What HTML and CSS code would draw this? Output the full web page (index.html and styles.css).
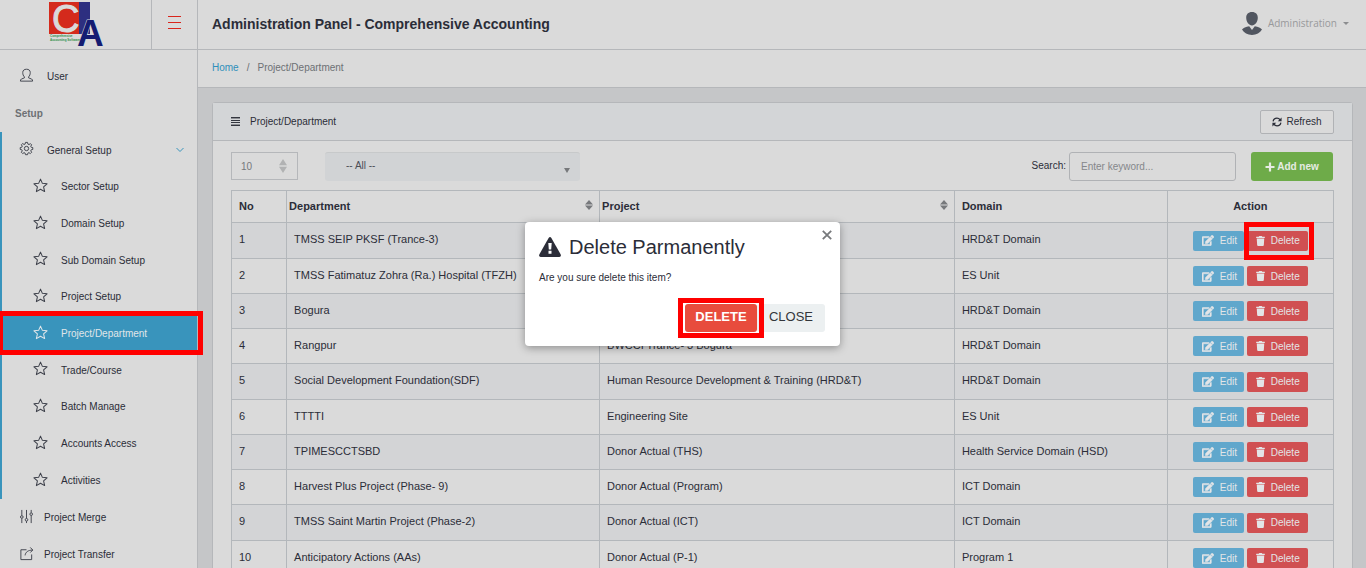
FILE: index.html
```html
<!DOCTYPE html>
<html lang="en">
<head>
<meta charset="utf-8">
<meta name="viewport" content="width=device-width, initial-scale=1">
<title>Administration Panel - Comprehensive Accounting</title>
<link rel="stylesheet" href="styles.css">
</head>
<body>
<svg class="sprite" aria-hidden="true">
  <symbol id="star" viewBox="0 0 16 16"><path d="M8 1.2 L10 5.700 L15 6.200 L11.300 9.500 L12.400 14.500 L8 12 L3.600 14.500 L4.700 9.500 L1 6.200 L6 5.700 Z" fill="none" stroke="currentColor" stroke-width="1.100" stroke-linejoin="round"/></symbol>
  <symbol id="edit" viewBox="0 0 576 512"><path fill="currentColor" d="M402.600 83.200l90.200 90.200c3.800 3.800 3.800 10 0 13.800L274.400 405.600l-92.800 10.300c-12.400 1.400-22.900-9.100-21.500-21.500l10.300-92.800L388.800 83.200c3.800-3.800 10-3.800 13.800 0zm162-22.900l-48.800-48.800c-15.200-15.200-39.900-15.200-55.200 0l-35.400 35.400c-3.800 3.800-3.800 10 0 13.800l90.200 90.200c3.800 3.800 10 3.800 13.800 0l35.400-35.400c15.200-15.300 15.200-40 0-55.200zM384 346.200V448H64V128h229.800c3.200 0 6.200-1.300 8.500-3.500l40-40c7.600-7.600 2.200-20.500-8.500-20.500H48C21.500 64 0 85.500 0 112v352c0 26.500 21.500 48 48 48h352c26.500 0 48-21.500 48-48V306.200c0-10.700-12.900-16-20.500-8.500l-40 40c-2.200 2.300-3.500 5.300-3.500 8.500z" stroke="currentColor" stroke-width="24"/></symbol>
  <symbol id="trash" viewBox="0 0 448 512"><path fill="currentColor" d="M432 32H312l-9.400-18.700A24 24 0 0 0 281.100 0H166.800a23.700 23.700 0 0 0-21.400 13.300L136 32H16A16 16 0 0 0 0 48v32a16 16 0 0 0 16 16h416a16 16 0 0 0 16-16V48a16 16 0 0 0-16-16zM53.200 467a48 48 0 0 0 47.900 45h245.800a48 48 0 0 0 47.900-45L416 128H32z"/></symbol>
  <symbol id="sort" viewBox="0 0 8 10"><path fill="currentColor" d="M4 0 L8 4.400 H0 Z M0 5.600 H8 L4 10 Z"/></symbol>
</svg>

<header class="topbar">
  <a class="brand" href="#" aria-label="Comprehensive Accounting Software">
    <svg class="logo" viewBox="0 0 54 45" aria-hidden="true">
      <rect width="31" height="32" fill="#d42a1c"/>
      <rect x="30" width="11" height="32" fill="#2d2f80"/>
      <text class="logo-c" x="3" y="30">C</text>
      <text class="logo-a" x="28" y="44">A</text>
      <text class="logo-s" x="1" y="35">Comprehensive</text>
      <text class="logo-s" x="1" y="39">Accounting Software</text>
    </svg>
  </a>
  <button class="burger" type="button" aria-label="Toggle menu"><i></i><i></i><i></i></button>
  <h1>Administration Panel - Comprehensive Accounting</h1>
  <button class="account" type="button">
    <svg class="avatar" viewBox="0 0 20 23" aria-hidden="true"><path fill="#515660" d="M10 0C13.800 0 15.800 2.200 15.800 5.800C15.800 10 13 13.500 10 13.500S4.200 10 4.200 5.800C4.200 2.200 6.200 0 10 0ZM7.200 14.200L10 18L12.800 14.200C16 14.800 19 16 20 17.600C18 21 14.500 23 10 23S2 21 0 17.600C1 16 4 14.800 7.200 14.200Z"/></svg>
    <span>Administration</span><i class="caret"></i>
  </button>
</header>

<div class="shell">
  <nav class="sidebar" aria-label="Main">
    <ul>
      <li><a href="#"><svg class="ico" viewBox="0 0 16 16" aria-hidden="true"><path d="M5.800 9.500C4.500 8.500 4 6.500 4 4.800C4 2.500 5.600 1.300 8 1.300S12 2.500 12 4.800C12 6.500 11.500 8.500 10.200 9.500V10.500L13.500 11.800Q14.500 12.300 14.500 14H1.500Q1.500 12.300 2.500 11.800L5.800 10.500Z"/></svg>User</a></li>
      <li class="title">Setup</li>
      <li class="group">
        <a class="short" href="#"><svg class="ico" viewBox="0 0 16 16" aria-hidden="true"><circle cx="8" cy="8" r="2.300"/><path d="M6.900 1.500H9.100L9.500 3.300L10.700 3.800L12.200 2.800L13.500 4.100L12.500 5.600L13 6.700L14.700 7V9L13 9.400L12.500 10.500L13.500 12L12.100 13.400L10.600 12.400L9.500 12.900L9.100 14.600H6.900L6.500 12.900L5.400 12.400L3.900 13.400L2.500 12L3.500 10.500L3 9.400L1.300 9V7L3 6.600L3.500 5.500L2.500 4L3.900 2.700L5.400 3.700L6.500 3.300Z"/></svg>General Setup<svg class="chev" viewBox="0 0 8 6" aria-hidden="true"><path d="M.5 1L4 4.500L7.500 1"/></svg></a>
        <ul class="sub">
          <li><a href="#"><svg class="ico"><use href="#star"/></svg>Sector Setup</a></li>
          <li><a href="#"><svg class="ico"><use href="#star"/></svg>Domain Setup</a></li>
          <li><a href="#"><svg class="ico"><use href="#star"/></svg>Sub Domain Setup</a></li>
          <li><a href="#"><svg class="ico"><use href="#star"/></svg>Project Setup</a></li>
          <li class="active"><a href="#" aria-current="page"><svg class="ico"><use href="#star"/></svg>Project/Department</a><span class="mark mark-menu"></span></li>
          <li><a href="#"><svg class="ico"><use href="#star"/></svg>Trade/Course</a></li>
          <li><a href="#"><svg class="ico"><use href="#star"/></svg>Batch Manage</a></li>
          <li><a href="#"><svg class="ico"><use href="#star"/></svg>Accounts Access</a></li>
          <li><a href="#"><svg class="ico"><use href="#star"/></svg>Activities</a></li>
        </ul>
      </li>
      <li class="tight"><a href="#"><svg class="ico" viewBox="0 0 16 16" aria-hidden="true"><path d="M3 1V7M3 10V15M8 1V10M8 13V15M13 1V4M13 7V15"/><circle cx="3" cy="8.500" r="1.400"/><circle cx="8" cy="11.500" r="1.400"/><circle cx="13" cy="5.500" r="1.400"/></svg>Project Merge</a></li>
      <li class="tight"><a href="#"><svg class="ico" viewBox="0 0 16 16" aria-hidden="true"><path d="M8 4H2V14.500H13.500V9M6.500 10C7 6.500 9.500 4.500 14.500 4.300M12 1.500L14.700 4.300L12 7"/></svg>Project Transfer</a></li>
    </ul>
  </nav>

  <main>
    <nav class="crumbs" aria-label="Breadcrumb"><a href="#">Home</a><span>/</span><span>Project/Department</span></nav>
    <section class="card">
      <header class="card-head">
        <svg class="lines" viewBox="0 0 9 9" aria-hidden="true"><path d="M0 .5H9M0 3.500H9M0 5.500H9M0 8.500H9" stroke="#33363f"/><path d="M0 1.500H9M0 7.500H9" stroke="#8d8f94"/></svg>
        <h2>Project/Department</h2>
        <button class="refresh" type="button"><svg viewBox="0 0 512 512" aria-hidden="true"><path fill="none" stroke="currentColor" stroke-width="66" d="M58 225C75 125 160 60 256 60C320 60 375 90 415 140M454 287C437 387 352 452 256 452C192 452 137 422 97 372"/><path fill="currentColor" d="M490 20V215H295ZM22 492V297H217Z"/></svg>Refresh</button>
      </header>
      <div class="card-body">
        <div class="tools">
          <div class="stepper"><input type="text" value="10" aria-label="Rows per page"><svg viewBox="0 0 8 14" aria-hidden="true"><path fill="#b1b2b3" d="M4 0L8 6.300H0ZM0 7.700H8L4 14Z"/></svg></div>
          <div class="picker"><select aria-label="Filter"><option>-- All --</option></select></div>
          <label class="search-label" for="keyword">Search:</label>
          <input class="search" id="keyword" type="text" placeholder="Enter keyword...">
          <button class="add" type="button"><svg viewBox="0 0 10 10" aria-hidden="true"><path d="M5 .5V9.500M.5 5H9.500" stroke="currentColor" stroke-width="2.200"/></svg>Add new</button>
        </div>
        <table>
          <colgroup><col class="c-no"><col class="c-dep"><col class="c-pro"><col class="c-dom"><col class="c-act"></colgroup>
          <thead><tr><th>No</th><th class="sortable"><div>Department<svg><use href="#sort"/></svg></div></th><th class="sortable"><div>Project<svg><use href="#sort"/></svg></div></th><th>Domain</th><th class="act">Action</th></tr></thead>
          <tbody id="rows"></tbody>
        </table>
      </div>
    </section>
  </main>
</div>

<div class="modal" role="dialog" aria-labelledby="modal-title">
  <button class="dismiss" type="button" aria-label="Close dialog"><svg viewBox="0 0 10 10" aria-hidden="true"><path d="M.8 .8L9.200 9.200M9.200 .8L.8 9.200" stroke="currentColor" stroke-width="1.800"/></svg></button>
  <h2 id="modal-title"><svg viewBox="0 0 22 20" aria-hidden="true"><path fill="#2b2d38" d="M9.600 .9Q11-.8 12.400 .9L21.700 17.500Q22.400 19.700 20.400 20H1.600Q-.4 19.700 .3 17.500Z"/><path fill="#fff" d="M9.300 6H12.700L12.200 12.600H9.800ZM9.500 13.800H12.500V16.800H9.500Z"/></svg>Delete Parmanently</h2>
  <p>Are you sure delete this item?</p>
  <div class="modal-actions">
    <div class="marked"><button class="confirm" type="button">DELETE</button><span class="mark mark-confirm"></span></div>
    <button class="close" type="button">CLOSE</button>
  </div>
</div>
<script src="rows.js"></script>
</body>
</html>
```
FILE: styles.css
```css
* { box-sizing: border-box; }
html, body { height: 100%; }
body {
  margin: 0;
  overflow: hidden;
  position: relative;
  display: flex;
  flex-direction: column;
  background: #c5c6c8;
  color: #2b2d38;
  font: 10px/15px "Liberation Sans", Arial, sans-serif;
}
h1, h2, p, ul { margin: 0; padding: 0; }
ul { list-style: none; }
a { color: inherit; text-decoration: none; }
button, input, select { font: inherit; color: inherit; margin: 0; }
button { border: 0; padding: 0; background: none; cursor: pointer; }
.sprite { position: absolute; width: 0; height: 0; }

.topbar {
  flex: none;
  display: flex;
  align-items: stretch;
  height: 50px;
  background: #dadada;
  border-bottom: 1px solid #b5b7ba;
}
.brand { width: 152px; border-right: 1px solid #b5b7ba; display: flex; justify-content: center; padding-top: 2px; }
.logo { width: 54px; height: 45px; overflow: visible; }
.logo-c { font: 38px "Liberation Sans", sans-serif; fill: #dadada; stroke: #dadada; }
.logo-a { font: bold 37px "Liberation Sans", sans-serif; fill: #141c72; stroke: #dadada; stroke-width: 1px; paint-order: stroke; }
.logo-s { font: bold 3px "Liberation Sans", sans-serif; fill: #2f8f4a; }
.burger { width: 46px; border-right: 1px solid #b5b7ba; display: flex; flex-direction: column; align-items: center; justify-content: center; gap: 5px; padding-bottom: 4px; }
.burger i { width: 13px; height: 1px; background: #d9251c; }
.topbar h1 { flex: 1; padding-left: 14px; font-size: 14px; line-height: 48px; }
.account { display: flex; align-items: center; gap: 6px; padding: 0 17px 2px 0; color: #98999b; font-family: "Open Sans", sans-serif; }
.avatar { width: 20px; height: 23px; }
.caret { border: 3px solid transparent; border-top-color: #8c8d8f; border-bottom: 0; }

.shell { flex: 1; display: flex; min-height: 0; }
.sidebar { flex: none; width: 198px; background: #dadada; border-right: 1px solid #b5b7ba; padding-top: 8px; }
.sidebar a, .title { display: flex; align-items: center; height: 37px; }
.sidebar a { padding-left: 19px; gap: 13px; }
.sidebar .title { padding-left: 15px; font-weight: bold; color: #6d7074; }
.sidebar .short { height: 36px; }
.ico { width: 15px; height: 15px; margin-bottom: 3px; fill: none; stroke: #3e414b; }
.group { border-left: 2px solid #3994bc; }
.group .short { padding-left: 17px; }
.group .sub a { padding-left: 31px; }
.sub li { position: relative; }
.sub li:nth-child(3n):not(:last-child) a { height: 36px; }
.sub .ico { color: #3e414b; stroke: none; }
.sub .active a { background: #3994bc; color: #e0e6e9; }
.sub .active .ico { color: #e0e6e9; }
.sidebar .tight a { gap: 10px; }
.chev { width: 8px; height: 6px; margin-left: auto; margin-right: 13px; fill: none; stroke: #3994bc; }

main { flex: 1; min-width: 0; }
.crumbs { display: flex; gap: 8px; align-items: center; height: 38px; padding: 0 14px 2px; background: #dadada; border-bottom: 1px solid #b5b7ba; color: #6d7074; }
.crumbs a { color: #2f8fbb; }
.card { margin: 14px 13px 0 14px; border: 1px solid #b5b7ba; border-radius: 3px; background: #dadada; }
.card-head { display: flex; align-items: center; height: 38px; padding: 0 18px; background: #d3d5d7; border-bottom: 1px solid #b5b7ba; }
.lines { width: 9px; height: 9px; margin-right: 10px; }
.card-head h2 { flex: 1; font-size: 10px; font-weight: normal; }
.refresh { display: flex; align-items: center; justify-content: center; gap: 4px; width: 74px; height: 24px; border: 1px solid #b0b2b5; border-radius: 2px; background: #dadada; }
.refresh svg { width: 10px; height: 10px; }
.card-body { padding: 11px 18px 40px; }
.tools { display: flex; align-items: flex-start; margin-bottom: 9px; padding-right: 1px; }
.stepper { display: flex; align-items: center; width: 67px; height: 28px; border: 1px solid #b5b7ba; padding: 0 10px 0 9px; color: #77797c; }
.stepper input { width: 38px; border: 0; padding: 0; background: none; }
.stepper svg { width: 8px; height: 14px; }
.picker { position: relative; margin: 0 auto 0 27px; width: 255px; }
.picker select { appearance: none; width: 100%; height: 29px; padding: 0 21px 4px; border: 0; border-top: 1px solid #c7c9ca; border-radius: 3px; background: #d1d3d5; color: #4b4e55; }
.picker::after { content: ""; position: absolute; right: 10px; top: 16px; border: 3px solid transparent; border-top: 5px solid #77797c; border-bottom: 0; }
.search-label { line-height: 28px; margin-right: 3px; }
.search { width: 167px; height: 29px; padding: 0 11px; border: 1px solid #b0b2b5; border-radius: 3px; background: none; }
.search::placeholder { color: #85878a; opacity: 1; }
.add { display: flex; align-items: center; justify-content: center; gap: 2px; width: 82px; height: 29px; margin-left: 15px; border-radius: 3px; background: #6eab49; color: #e6ebe3; font-weight: bold; }
.add svg { width: 10px; height: 10px; }

table { width: 100%; table-layout: fixed; border-collapse: collapse; font-size: 11px; }
.c-no { width: 5%; }
.c-dep { width: 28.4%; }
.c-pro { width: 32.2%; }
.c-dom { width: 19.3%; }
.c-act { width: 15.1%; }
th, td { border: 1px solid #b3b7bb; padding: 0 7px; text-align: left; white-space: nowrap; }
th { height: 32px; }
td { height: 35px; padding-bottom: 2px; }
td:last-child { padding-bottom: 0; }
tbody tr:nth-child(4n+1) td { height: 36px; }
tbody tr:nth-child(odd) { background: #d3d4d6; }
.sortable { padding: 0 6px 0 2px; }
.sortable div { display: flex; justify-content: space-between; align-items: center; }
.sortable svg { width: 8px; height: 10px; margin-bottom: 3px; color: #77797c; }
.act { text-align: center; }
.buttons { display: flex; justify-content: center; gap: 3px; font-size: 10px; }
.buttons button { display: flex; align-items: center; gap: 6px; height: 20px; border-radius: 2px; color: #e3e5e7; }
.edit { width: 51px; padding-left: 9px; background: #60a7cc; }
.edit svg { width: 12px; height: 11px; }
.buttons .delete { width: 61px; padding-left: 9px; background: #d05052; }
.delete svg { width: 9px; height: 10px; }

.marked { position: relative; }
.mark { position: absolute; pointer-events: none; border: 5px solid #f00; z-index: 2; }
.mark-menu { inset: -4px -6px -3px -4px; }
.mark-row { inset: -9px -6px -9px -3px; }
.mark-confirm { inset: -6px -7px; }

.modal {
  position: absolute;
  top: 222px;
  left: 50%;
  transform: translateX(-158px);
  width: 315px;
  padding: 12px 15px 14px 14px;
  border-radius: 4px;
  background: #fff;
  box-shadow: 0 2px 8px rgba(0, 0, 0, .35);
}
.modal h2 { display: flex; align-items: center; gap: 8px; font-size: 20px; line-height: 26px; font-weight: normal; }
.modal h2 svg { width: 22px; height: 20px; }
.modal p { margin: 10px 0 19px; }
.dismiss { position: absolute; top: 8px; right: 8px; width: 10px; height: 10px; color: #77797c; }
.dismiss svg { display: block; }
.modal-actions { display: flex; justify-content: flex-end; }
.modal-actions button { height: 28px; border-radius: 3px; font-size: 13px; padding-bottom: 3px; }
.confirm { width: 72px; background: #e84c3d; color: #fff; font-weight: bold; }
.close { width: 68px; background: #ecf0f1; color: #33363b; }
```
FILE: rows.js
```js
const rows = [
  ["TMSS SEIP PKSF (Trance-3)", "", "HRD&T Domain"],
  ["TMSS Fatimatuz Zohra (Ra.) Hospital (TFZH)", "", "ES Unit"],
  ["Bogura", "", "HRD&T Domain"],
  ["Rangpur", "BWCCI Trance- 3 Bogura", "HRD&T Domain"],
  ["Social Development Foundation(SDF)", "Human Resource Development & Training (HRD&T)", "HRD&T Domain"],
  ["TTTTI", "Engineering Site", "ES Unit"],
  ["TPIMESCCTSBD", "Donor Actual (THS)", "Health Service Domain (HSD)"],
  ["Harvest Plus Project (Phase- 9)", "Donor Actual (Program)", "ICT Domain"],
  ["TMSS Saint Martin Project (Phase-2)", "Donor Actual (ICT)", "ICT Domain"],
  ["Anticipatory Actions (AAs)", "Donor Actual (P-1)", "Program 1"]
];

const body = document.getElementById("rows");
rows.forEach((row, index) => {
  const tr = body.insertRow();
  [String(index + 1), ...row].forEach((text) => {
    tr.insertCell().textContent = text;
  });
  const mark = index === 0 ? '<span class="mark mark-row"></span>' : "";
  tr.insertCell().innerHTML =
    '<div class="buttons"><button class="edit" type="button"><svg><use href="#edit"/></svg>Edit</button>' +
    '<div class="marked"><button class="delete" type="button"><svg><use href="#trash"/></svg>Delete</button>' + mark + "</div></div>";
});
```
